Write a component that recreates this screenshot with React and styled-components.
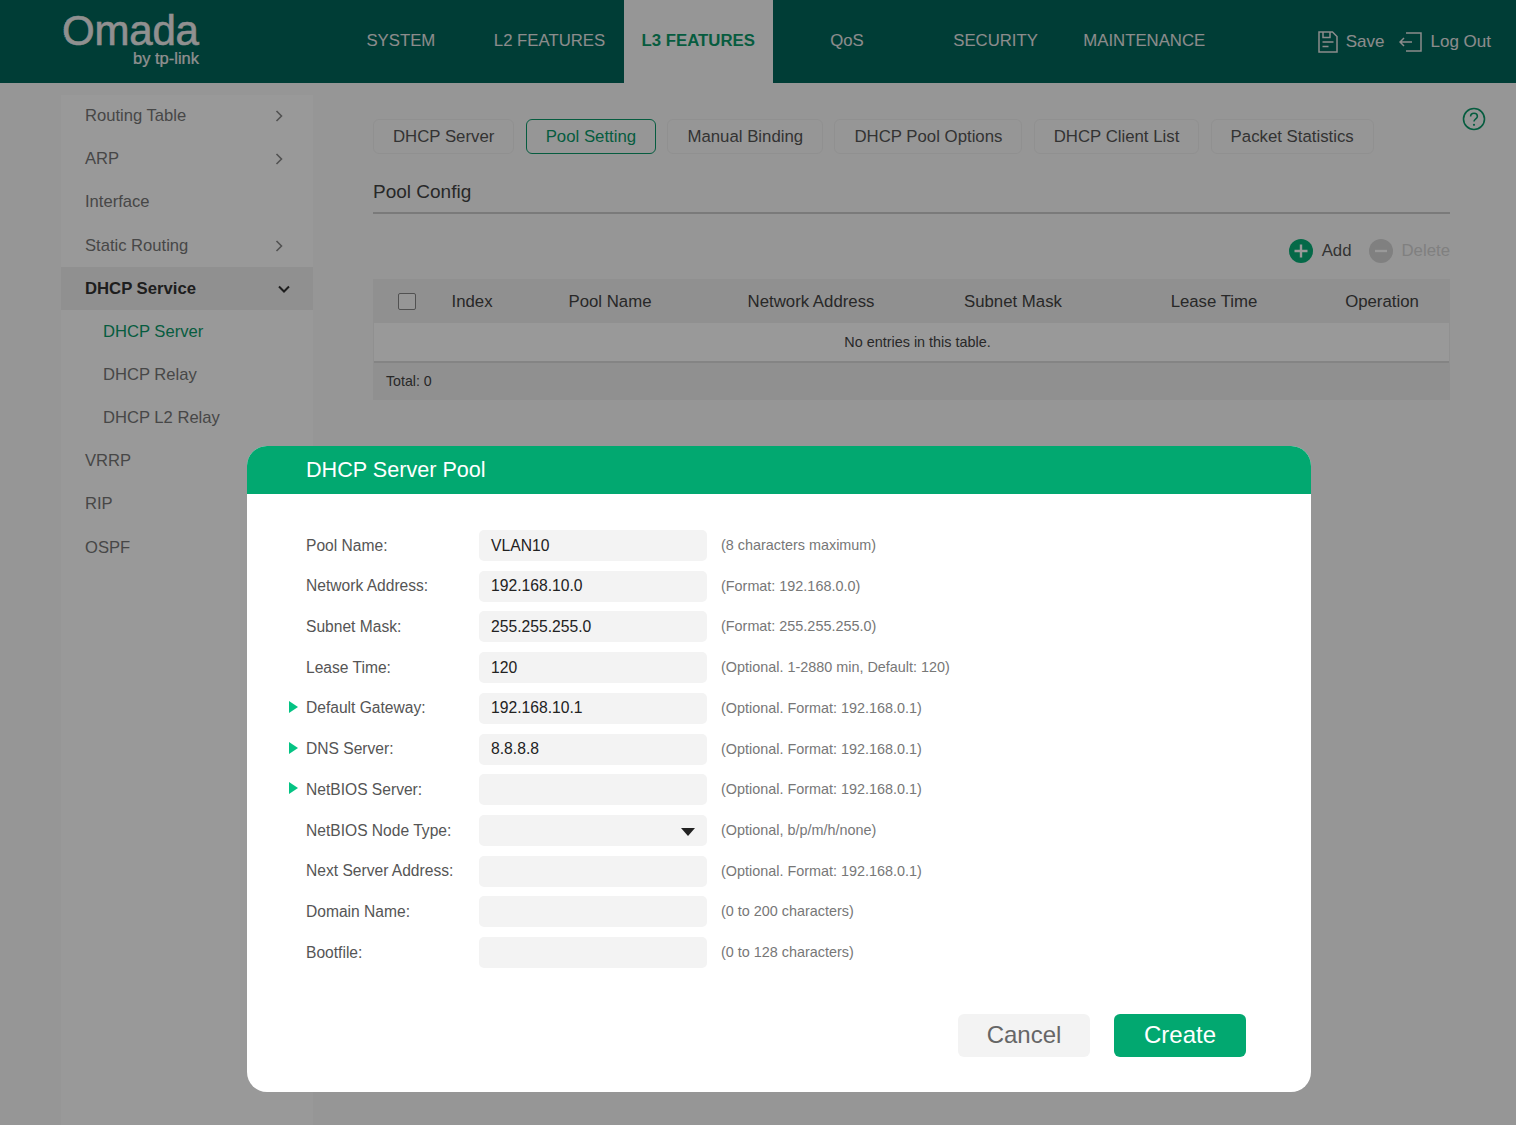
import React from 'react';
import styled, { createGlobalStyle } from 'styled-components';

const Global = createGlobalStyle`
  html, body { margin: 0; padding: 0; height: 100%; }
  body { font-family: "Liberation Sans", Arial, sans-serif; background: #fbfbfb; color: #333; }
  * { box-sizing: border-box; }
`;
const Page = styled.div`
  position: relative; width: 1516px; height: 1125px; overflow: hidden;
  display: flex; flex-direction: column; background: #fbfbfb;
`;
const Header = styled.header`
  height: 83px; flex: none; background: #00665b; display: flex; align-items: stretch;
`;
const LogoWrap = styled.div`
  width: 326.5px; flex: none; padding: 12px 0 0 62px; display: flex; flex-direction: column; position: relative;
`;
const LogoMain = styled.div`
  width: 138px; font-size: 42px; line-height: 38px; color: #f0f0f0; letter-spacing: -0.2px;
  -webkit-text-stroke: 0.6px #f0f0f0;
`;
const LogoSub = styled.div`
  width: 137px; margin-top: 1px; text-align: right; font-size: 16.5px; line-height: 14px; color: #f0f0f0;
  -webkit-text-stroke: 0.2px #f0f0f0;
`;
const LogoDots = styled.svg`
  position: absolute; left: 61px; top: 14px;
`;
const Nav = styled.nav`
  display: grid; grid-template-columns: repeat(6, 148.7px); flex: none;
`;
const NavItem = styled.div`
  display: flex; align-items: center; justify-content: center;
  padding-bottom: 2px; font-size: 16.75px;
  color: ${p => (p.$active ? '#0a9a6a' : '#e9e9e9')};
  background: ${p => (p.$active ? '#fbfbfb' : 'transparent')};
  font-weight: ${p => (p.$active ? 700 : 400)};
`;
const HeaderActions = styled.div`
  margin-left: auto; padding: 0 25px 0 0; display: flex; align-items: center; font-size: 17px; color: #e9e9e9;
`;
const ActionLabel = styled.span`
  margin-left: ${p => p.$lead}px; margin-right: ${p => p.$gap || 0}px;
`;
const Body = styled.div`
  flex: 1; display: flex; min-height: 0; position: relative;
`;
const Sidebar = styled.aside`
  width: 252px; margin: 11.6px 0 0 61px; background: #fff; flex: none;
`;
const SideItem = styled.div`
  height: 43.15px; display: flex; align-items: center; justify-content: space-between;
  padding: 0 ${p => (p.$open ? 22 : 27)}px 0 ${p => (p.$sub ? 42 : 24)}px;
  font-size: ${p => (p.$open ? 16.7 : 16.6)}px;
  color: ${p => (p.$green ? '#0a9a6a' : p.$open ? '#333' : '#777')};
  font-weight: ${p => (p.$open ? 700 : 400)};
  background: ${p => (p.$open ? '#f0f0f0' : 'transparent')};
`;
const Main = styled.main`
  width: 1077px; margin-left: 60px; padding-top: 36px; flex: none;
`;
const Tabs = styled.div`
  display: flex; gap: 11.3px;
`;
const Tab = styled.div`
  height: 35px; padding: 0 19px; display: flex; align-items: center; font-size: 16.8px; border-radius: 6px;
  border: 1.5px solid ${p => (p.$active ? '#0a9a6a' : '#f0f0f0')};
  color: ${p => (p.$active ? '#0a9a6a' : '#555')};
`;
const Section = styled.div`
  margin-top: 21px; height: 39px; border-bottom: 2px solid #ccc; font-size: 19px; line-height: 34px; color: #444;
`;
const TableTools = styled.div`
  height: 65px; padding-top: 8px; display: flex; justify-content: flex-end; align-items: center; font-size: 16.8px;
`;
const ToolLabel = styled.span`
  margin-left: ${p => p.$lead}px; margin-right: ${p => p.$gap || 0}px; color: ${p => (p.$off ? '#d5d5d5' : '#555')};
`;
const Table = styled.div`
  border: 1px solid #f0f0f0; background: #fff;
`;
const THead = styled.div`
  height: 43px; background: #f0f0f0; display: grid;
  grid-template-columns: 60px 76px 200px 202px 202px 200px 136px; align-items: center;
  font-size: 16.8px; color: #444;
`;
const THCell = styled.div`
  text-align: center;
`;
const CheckCell = styled.div`
  padding-left: 24px; display: flex;
`;
const Check = styled.div`
  width: 18px; height: 17px; border: 1.5px solid #888; border-radius: 2px; background: #fafafa;
`;
const Empty = styled.div`
  height: 40px; padding-left: 12px; display: flex; align-items: center; justify-content: center;
  font-size: 14.4px; color: #444; border-bottom: 2px solid #ddd;
`;
const TFoot = styled.div`
  height: 36px; background: #f0f0f0; padding-left: 12px; display: flex; align-items: center; font-size: 14.2px; color: #444;
`;
const HelpIcon = styled.svg`
  position: absolute; left: 1462px; top: 24px;
`;
const Overlay = styled.div`
  position: absolute; inset: 0; background: rgba(0, 0, 0, 0.4);
`;
const Modal = styled.div`
  position: absolute; left: 247px; top: 446px; width: 1064px; height: 646px; background: #fff; border-radius: 20px;
  overflow: hidden; display: flex; flex-direction: column;
`;
const ModalHead = styled.div`
  height: 48px; flex: none; background: #02a870; color: #fff; font-size: 21.6px; padding: 0 0 0 59px;
  display: flex; align-items: center;
`;
const Form = styled.div`
  padding: 36px 0 0 42px; display: flex; flex-direction: column; gap: 9.72px;
`;
const Row = styled.div`
  display: flex; align-items: center; height: 31px;
`;
const Marker = styled.div`
  width: 17px; flex: none; display: flex;
`;
const Tri = styled.div`
  width: 0; height: 0; border-left: 9px solid #04c383;
  border-top: 6.5px solid transparent; border-bottom: 6.5px solid transparent;
  margin-top: -3px;
`;
const Label = styled.div`
  width: 173px; flex: none; font-size: 15.6px; color: #555;
`;
const Field = styled.div`
  width: 228px; height: 31px; flex: none; background: #f3f3f3; border-radius: 5px; padding: 0 12px;
  display: flex; align-items: center; justify-content: space-between; font-size: 15.7px; color: #222;
`;
const Caret = styled.div`
  width: 0; height: 0; margin-top: 3px; border-top: 8px solid #222;
  border-left: 7px solid transparent; border-right: 7px solid transparent;
`;
const Hint = styled.div`
  margin-left: 14px; padding-bottom: 1px; font-size: 14.4px; color: #777;
`;
const Buttons = styled.div`
  margin-top: auto; padding: 0 65px 35px 0; display: flex; justify-content: flex-end; gap: 24px;
`;
const Btn = styled.div`
  width: 132px; height: 43px; padding-bottom: 2px; border-radius: 6px; display: flex; align-items: center; justify-content: center;
  font-size: 24px; background: ${p => (p.$primary ? '#02a870' : '#f3f3f3')}; color: ${p => (p.$primary ? '#fff' : '#666')};
`;

const Chevron = ({ down }) => (
  <svg width="14" height="14" viewBox="0 0 14 14" fill="none" stroke={down ? '#333' : '#888'} strokeWidth={down ? 2 : 1.6}>
    <path d={down ? 'M2 4.5l5 5 5-5' : 'M4.5 2l5 5-5 5'} />
  </svg>
);

const SaveIcon = () => (
  <svg width="20" height="22" viewBox="0 0 20 22" fill="none" stroke="#e9e9e9" strokeWidth="1.5">
    <path d="M1 1h13.5L19 5.5V21H1z" />
    <path d="M5 1v5.5h7V1M4.5 11h11M4.5 15.5h6" />
  </svg>
);
const LogoutIcon = () => (
  <svg width="23" height="20" viewBox="0 0 23 20" fill="none" stroke="#e9e9e9" strokeWidth="1.5">
    <path d="M7 1h15v18H7" />
    <path d="M1 10h12M5 6l-4 4 4 4" />
  </svg>
);
const AddIcon = () => (
  <svg width="24" height="24" viewBox="0 0 24 24">
    <circle cx="12" cy="12" r="12" fill="#08b078" />
    <path d="M12 5.5v13M5.5 12h13" stroke="#fff" strokeWidth="2.4" />
  </svg>
);
const DelIcon = () => (
  <svg width="24" height="24" viewBox="0 0 24 24">
    <circle cx="12" cy="12" r="12" fill="#d5d5d5" />
    <path d="M6 12h12" stroke="#fff" strokeWidth="2.4" />
  </svg>
);

const nav = ['SYSTEM', 'L2 FEATURES', 'L3 FEATURES', 'QoS', 'SECURITY', 'MAINTENANCE'];
const side = [
  { t: 'Routing Table', c: 1 }, { t: 'ARP', c: 1 }, { t: 'Interface' }, { t: 'Static Routing', c: 1 },
  { t: 'DHCP Service', open: 1 }, { t: 'DHCP Server', sub: 1, green: 1 }, { t: 'DHCP Relay', sub: 1 },
  { t: 'DHCP L2 Relay', sub: 1 }, { t: 'VRRP' }, { t: 'RIP' }, { t: 'OSPF' },
];
const tabs = ['DHCP Server', 'Pool Setting', 'Manual Binding', 'DHCP Pool Options', 'DHCP Client List', 'Packet Statistics'];
const cols = ['Index', 'Pool Name', 'Network Address', 'Subnet Mask', 'Lease Time', 'Operation'];
const rows = [
  ['Pool Name:', 'VLAN10', '(8 characters maximum)'],
  ['Network Address:', '192.168.10.0', '(Format: 192.168.0.0)'],
  ['Subnet Mask:', '255.255.255.0', '(Format: 255.255.255.0)'],
  ['Lease Time:', '120', '(Optional. 1-2880 min, Default: 120)'],
  ['Default Gateway:', '192.168.10.1', '(Optional. Format: 192.168.0.1)', 1],
  ['DNS Server:', '8.8.8.8', '(Optional. Format: 192.168.0.1)', 1],
  ['NetBIOS Server:', '', '(Optional. Format: 192.168.0.1)', 1],
  ['NetBIOS Node Type:', '', '(Optional, b/p/m/h/none)', 0, 1],
  ['Next Server Address:', '', '(Optional. Format: 192.168.0.1)'],
  ['Domain Name:', '', '(0 to 200 characters)'],
  ['Bootfile:', '', '(0 to 128 characters)'],
];

export default function App() {
  return (
    <Page>
      <Global />
      <Header>
        <LogoWrap>
          <LogoMain>Omada</LogoMain>
          <LogoSub>by tp-link</LogoSub>
          <LogoDots width="18" height="32" viewBox="0 0 18 32" fill="none">
            <path d="M4.4 6.7A14.5 14.5 0 0 0 4.4 25.3" stroke="#00665b" strokeWidth="2.5" strokeDasharray="1 1.6" />
          </LogoDots>
        </LogoWrap>
        <Nav>
          {nav.map(n => <NavItem key={n} $active={n === 'L3 FEATURES'}>{n}</NavItem>)}
        </Nav>
        <HeaderActions>
          <SaveIcon /><ActionLabel $lead={8} $gap={14}>Save</ActionLabel>
          <LogoutIcon /><ActionLabel $lead={9}>Log Out</ActionLabel>
        </HeaderActions>
      </Header>
      <Body>
        <Sidebar>
          {side.map(s => (
            <SideItem key={s.t} $sub={s.sub} $green={s.green} $open={s.open}>
              {s.t}
              {s.c && <Chevron />}
              {s.open && <Chevron down />}
            </SideItem>
          ))}
        </Sidebar>
        <Main>
          <Tabs>
            {tabs.map(t => <Tab key={t} $active={t === 'Pool Setting'}>{t}</Tab>)}
          </Tabs>
          <Section>Pool Config</Section>
          <TableTools>
            <AddIcon /><ToolLabel $lead={9} $gap={18}>Add</ToolLabel>
            <DelIcon /><ToolLabel $lead={8} $off>Delete</ToolLabel>
          </TableTools>
          <Table>
            <THead>
              <CheckCell><Check /></CheckCell>
              {cols.map(c => <THCell key={c}>{c}</THCell>)}
            </THead>
            <Empty>No entries in this table.</Empty>
            <TFoot>Total: 0</TFoot>
          </Table>
        </Main>
        <HelpIcon width="24" height="24" viewBox="0 0 24 24" fill="none">
          <circle cx="12" cy="12" r="10.5" stroke="#0a9a6a" strokeWidth="1.6" />
          <path d="M8.6 9.5c0-2 1.5-3.3 3.4-3.3s3.4 1.3 3.4 3c0 2.6-3.4 2.6-3.4 5.4" stroke="#0a9a6a" strokeWidth="1.6" />
          <circle cx="12" cy="17.8" r="1.1" fill="#0a9a6a" />
        </HelpIcon>
      </Body>
      <Overlay />
      <Modal>
        <ModalHead>DHCP Server Pool</ModalHead>
        <Form>
          {rows.map(([l, v, h, m, sel]) => (
            <Row key={l}>
              <Marker>{m ? <Tri /> : null}</Marker>
              <Label>{l}</Label>
              <Field>{v}{sel ? <><span /><Caret /></> : null}</Field>
              <Hint>{h}</Hint>
            </Row>
          ))}
        </Form>
        <Buttons>
          <Btn>Cancel</Btn>
          <Btn $primary>Create</Btn>
        </Buttons>
      </Modal>
    </Page>
  );
}
